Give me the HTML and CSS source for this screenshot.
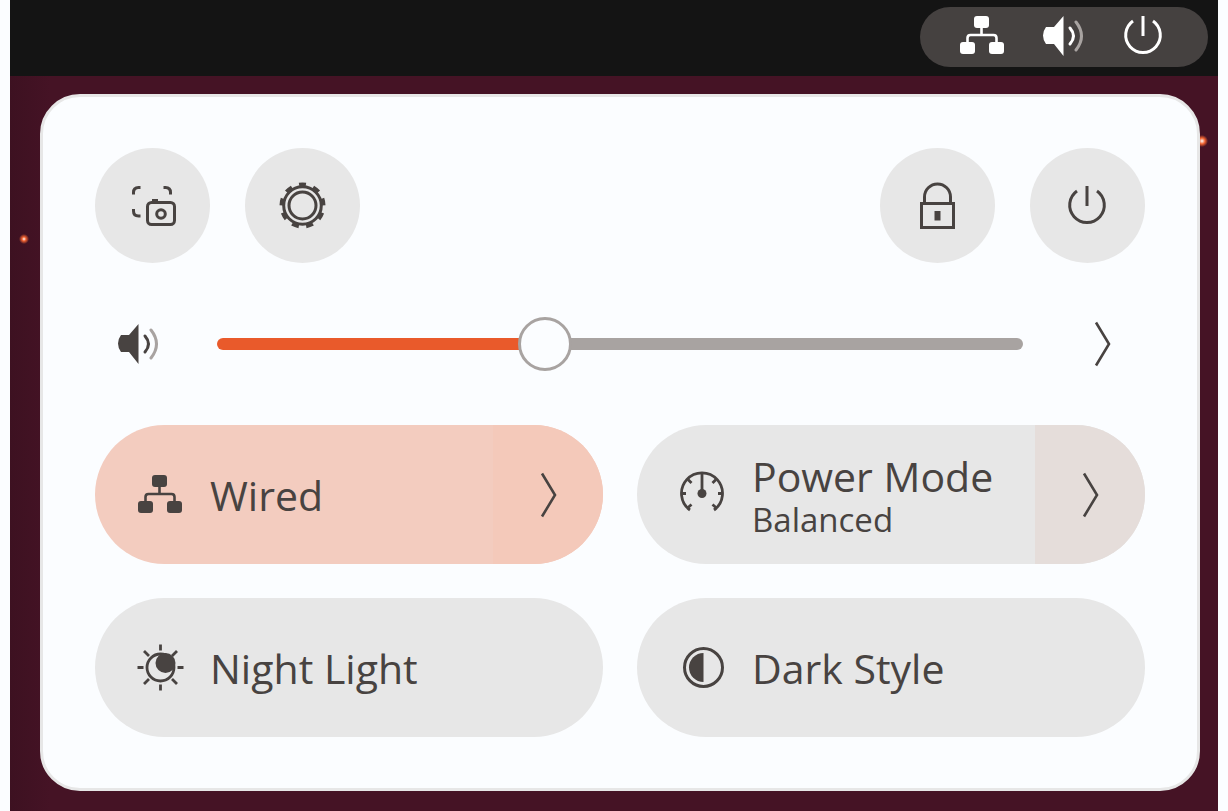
FILE: index.html
```html
<!DOCTYPE html>
<html lang="en">
<head>
<meta charset="utf-8">
<meta name="viewport" content="width=device-width, initial-scale=1">
<title>Quick Settings</title>
<link rel="stylesheet" href="styles.css">
</head>
<body>
<svg class="sprite" aria-hidden="true">
  <symbol id="network" viewBox="0 0 48 48">
    <g fill="currentColor"><rect x="16" y="4" width="15" height="12" rx="3"/><rect x="2" y="30" width="15" height="12" rx="3"/><rect x="31" y="30" width="15" height="12" rx="3"/></g>
    <path d="M23.500 15v8M9.500 31v-5q0-3 3-3h23q3 0 3 3v5" fill="none" stroke="currentColor" stroke-width="2.600"/>
  </symbol>
  <symbol id="speaker" viewBox="0 0 48 48">
    <path d="M7 15h8L24.500 4v40L15 32H7q-3-4-3-8.500T7 15z" fill="currentColor"/>
    <path d="M31 16q7 8 0 16" fill="none" stroke="currentColor" stroke-width="3" stroke-linecap="round"/>
    <path d="M37 10q11 14 0 28" fill="none" stroke="#a8a3a1" stroke-width="3" stroke-linecap="round"/>
  </symbol>
  <symbol id="power" viewBox="0 0 48 48">
    <path d="M13 9A17.300 17.300 0 1 0 33 9M23 4v20" fill="none" stroke="currentColor" stroke-width="3"/>
  </symbol>
  <symbol id="chevron" viewBox="0 0 48 48">
    <path d="M18 2.500L31 24 18 45.500" fill="none" stroke="currentColor" stroke-width="2.600"/>
  </symbol>
</svg>

<div class="desktop">
  <header class="topbar">
    <button class="status" aria-label="System menu">
      <svg class="icon"><use href="#network"/></svg>
      <svg class="icon"><use href="#speaker"/></svg>
      <svg class="icon"><use href="#power"/></svg>
    </button>
  </header>

  <main class="panel">
    <div class="actions">
      <button class="round" aria-label="Take screenshot">
        <svg class="icon" viewBox="0 0 48 48" fill="none" stroke="currentColor" stroke-width="3">
          <path d="M4.500 12.500v-2q0-5 5-5h2M34.500 5.500h2q5 0 5 5v2M4.500 27v2q0 5 5 5h2"/>
          <rect x="18.500" y="20.500" width="27" height="22" rx="4"/>
          <path d="M23 18.500h6"/>
          <circle cx="32" cy="32" r="4.300"/>
        </svg>
      </button>
      <button class="round" aria-label="Settings">
        <svg class="icon" viewBox="0 0 48 48" fill="none" stroke="currentColor" stroke-width="3">
          <circle cx="23.500" cy="23.500" r="13.500"/>
          <circle cx="23.500" cy="23.500" r="18.800"/>
          <circle cx="23.500" cy="23.500" r="21" stroke-width="4" pathLength="90" stroke-dasharray="4.800 5.200" stroke-dashoffset="2.400" transform="rotate(-90 23.500 23.500)"/>
        </svg>
      </button>
      <button class="round push" aria-label="Lock screen">
        <svg class="icon" viewBox="0 0 48 48" fill="none" stroke="currentColor" stroke-width="3">
          <rect x="7.500" y="21.500" width="32" height="24"/>
          <path d="M10.500 21v-6a13 13 0 0 1 26 0v6"/>
          <path d="M23.500 29v9.500" stroke-width="6"/>
        </svg>
      </button>
      <button class="round" aria-label="Power off">
        <svg class="icon"><use href="#power"/></svg>
      </button>
    </div>

    <div class="volume">
      <button class="flat" aria-label="Mute"><svg class="icon"><use href="#speaker"/></svg></button>
      <input class="slider" type="range" min="0" max="100" value="40" aria-label="Volume">
      <button class="flat" aria-label="Sound output"><svg class="icon"><use href="#chevron"/></svg></button>
    </div>

    <div class="tiles">
      <div class="tile active">
        <button class="toggle" aria-pressed="true">
          <svg class="icon"><use href="#network"/></svg>
          <span class="label">Wired</span>
        </button>
        <button class="more" aria-label="Wired options"><svg class="icon"><use href="#chevron"/></svg></button>
      </div>
      <div class="tile">
        <button class="toggle">
          <svg class="icon" viewBox="0 0 48 48" fill="none" stroke="currentColor" stroke-width="2.800">
            <path d="M12 39A20.500 20.500 0 1 1 36 39"/>
            <path d="M24 3v19M4 22.500h4M40 22.500h4M10 8.500l3.500 3.500M38 8.500L34.500 12M9.500 37l4-3.500M38.500 37l-4-3.500"/>
            <circle cx="24" cy="22.500" r="4.500" fill="currentColor" stroke="none"/>
          </svg>
          <span class="text"><span class="label">Power Mode</span><span class="sub">Balanced</span></span>
        </button>
        <button class="more" aria-label="Power mode options"><svg class="icon"><use href="#chevron"/></svg></button>
      </div>
      <div class="tile">
        <button class="toggle">
          <svg class="icon" viewBox="0 0 48 48" fill="none" stroke="currentColor" stroke-width="2.800">
            <circle cx="24.500" cy="23.500" r="13.500"/>
            <circle cx="29.500" cy="19" r="10" fill="currentColor" stroke="none"/>
            <path d="M24.500 .500v6M24.500 40.500v6M1.500 23.500h6M41.500 23.500h6M8 7l5 5M41 7l-5 5M8 40l5-5M41 40l-5-5"/>
          </svg>
          <span class="label">Night Light</span>
        </button>
      </div>
      <div class="tile">
        <button class="toggle">
          <svg class="icon" viewBox="0 0 48 48">
            <circle cx="25.500" cy="23.500" r="19" fill="none" stroke="currentColor" stroke-width="3"/>
            <path d="M25.500 9a14.500 14.500 0 0 0 0 29z" fill="currentColor"/>
          </svg>
          <span class="label">Dark Style</span>
        </button>
      </div>
    </div>
  </main>
</div>
</body>
</html>
```

FILE: styles.css
```css
* {
  box-sizing: border-box;
}

body {
  margin: 0;
  background: #fbfdff;
  color: #484341;
  font-family: "Open Sans", "Noto Sans", sans-serif;
  font-weight: 400;
}

button {
  display: flex;
  align-items: center;
  justify-content: center;
  margin: 0;
  padding: 0;
  border: 0;
  background: none;
  color: inherit;
  font: inherit;
  cursor: pointer;
}

.sprite {
  display: none;
}

.icon {
  flex: none;
  width: 48px;
  height: 48px;
}

.desktop {
  display: flex;
  flex-direction: column;
  min-height: 100vh;
  margin: 0 10px;
  background:
    radial-gradient(circle at 14px 239px, #fff 0, #f0622f 2px, #45132500 5px),
    radial-gradient(circle at 1192px 141px, #fff 0, #f0622f 3px, #45132500 6px),
    linear-gradient(90deg, #3d1121, #451325 40px);
}

.topbar {
  display: flex;
  justify-content: flex-end;
  padding: 7px 10px 9px;
  background: #141414;
}

.status {
  gap: 33px;
  height: 60px;
  padding: 0 40px 2px 38px;
  border-radius: 30px;
  background: #454140;
  color: #fff;
}

.panel {
  flex: 1;
  display: flex;
  flex-direction: column;
  margin: 18px 18px 20px 30px;
  padding: 51px 52px;
  border: 3px solid #e7e7e7;
  border-radius: 40px;
  background: #fbfdff;
}

.actions {
  display: flex;
  gap: 35px;
}

.round {
  width: 115px;
  height: 115px;
  border-radius: 50%;
  background: #e7e7e7;
}

.push {
  margin-left: auto;
}

.volume {
  display: flex;
  align-items: center;
  gap: 36px;
  height: 162px;
}

.flat {
  width: 86px;
  height: 86px;
}

.slider {
  flex: 1;
  min-width: 0;
  height: 54px;
  margin: 0;
  background: none;
  appearance: none;
}

.slider::-webkit-slider-runnable-track {
  height: 12px;
  border-radius: 6px;
  background: linear-gradient(90deg, #e95a2b 41%, #a8a3a1 41%);
}

.slider::-webkit-slider-thumb {
  width: 54px;
  height: 54px;
  margin-top: -21px;
  border: 3px solid #a8a3a1;
  border-radius: 50%;
  background: #fbfdff;
  appearance: none;
}

.tiles {
  display: grid;
  grid-template-columns: 1fr 1fr;
  gap: 34px;
}

.tile {
  display: flex;
  height: 139px;
  overflow: hidden;
  border-radius: 70px;
  background: #e7e7e7;
}

.toggle {
  flex: 1;
  justify-content: flex-start;
  gap: 26px;
  padding-left: 41px;
  text-align: left;
}

.more {
  width: 110px;
  background: #e5ddda;
}

.active {
  background: #f3ccbf;
}

.active .more {
  background: #f4c9ba;
}

.text {
  display: flex;
  flex-direction: column;
  padding-top: 2px;
}

.label {
  font-size: 41px;
  line-height: 48px;
}

.sub {
  font-size: 33px;
  line-height: 40px;
}
```
